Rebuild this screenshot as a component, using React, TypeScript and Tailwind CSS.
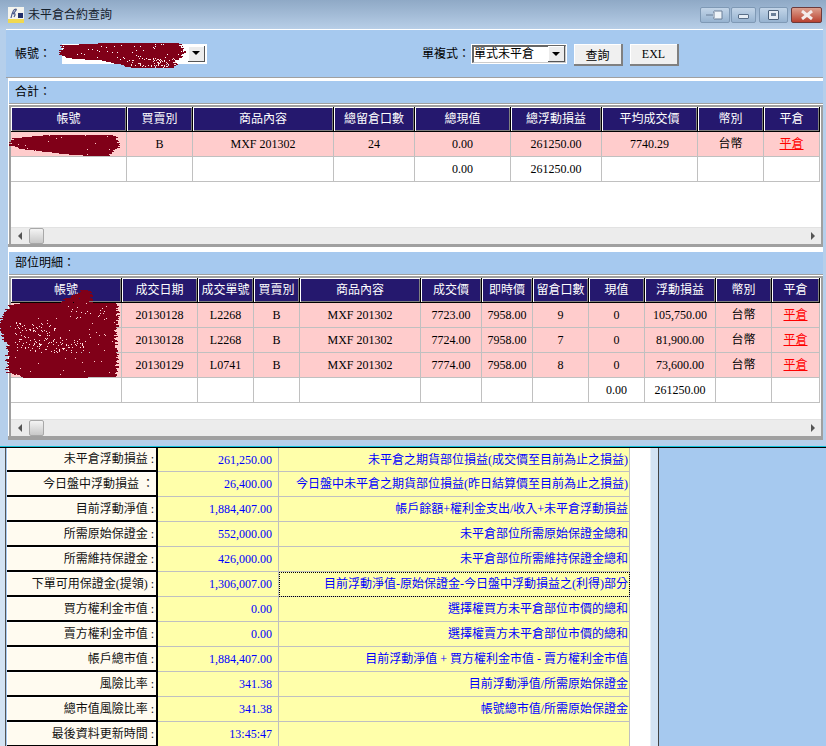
import React from "react";

type Key = [number, number, number];

function scribble(keys: Key[], seed: number, holes: number): string {
  let s = seed;
  const rnd = () => {
    s = (s * 16807) % 2147483647;
    return s / 2147483647;
  };
  let d = "";
  for (let k = 0; k < keys.length - 1; k++) {
    const [y0, l0, r0] = keys[k];
    const [y1, l1, r1] = keys[k + 1];
    for (let y = y0; y < y1; y++) {
      const t = (y - y0) / (y1 - y0);
      const l = Math.round(l0 + (l1 - l0) * t + (rnd() - 0.5) * 5);
      const r = Math.round(r0 + (r1 - r0) * t + (rnd() - 0.5) * 5);
      let x = l;
      while (x < r) {
        let w = 1;
        while (x + w < r && rnd() > holes) w++;
        d += `M${x} ${y}h${w}v1h${-w}z`;
        x += w + 1;
      }
    }
  }
  return d;
}

function dots(x: number, y: number, w: number, h: number, count: number, seed: number): string {
  let s = seed;
  const rnd = () => {
    s = (s * 16807) % 2147483647;
    return s / 2147483647;
  };
  let d = "";
  for (let i = 0; i < count; i++) {
    d += `M${Math.round(x + rnd() * w)} ${Math.round(y + rnd() * h)}h1v1h-1z`;
  }
  return d;
}

const blobs = [
  scribble([[43, 100, 180], [45, 62, 180], [52, 60, 185], [55, 62, 183], [58, 70, 178], [60, 100, 176], [64, 120, 176], [68, 132, 174]], 71, 0.02),
  scribble([[135, 45, 115], [138, 12, 118], [145, 10, 118], [148, 20, 117], [152, 50, 112], [156, 92, 108]], 137, 0.006),
  scribble([[290, 82, 90], [302, 60, 92], [303, 20, 118], [305, 10, 118], [320, 0, 118], [330, 0, 116], [345, 8, 117], [360, 7, 117], [372, 8, 117], [376, 22, 116], [378, 28, 60]], 419, 0.006),
];

const specks = [
  dots(15, 322, 40, 30, 110, 991),
  dots(55, 340, 30, 12, 40, 5323),
  dots(130, 58, 46, 9, 70, 2203),
  dots(70, 306, 40, 12, 16, 7741),
];

const HEAD = "h-[25px] p-0 bg-[#25186e] text-white font-normal text-center border-r border-b border-black shadow-[inset_1px_1px_0_#ffffff,inset_-1px_-1px_0_#808080]";
const CELL = "h-[25px] p-0 text-center border-r border-b border-[#c0c0c0] whitespace-nowrap";

function Grid({ widths, heads, rows }: { widths: string[]; heads: string[]; rows: { pink: boolean; cells: string[] }[] }) {
  return (
    <table className="table-fixed border-separate border-spacing-0 w-[809px] text-black">
      <colgroup>
        {widths.map((w, i) => (
          <col key={i} className={w} />
        ))}
      </colgroup>
      <thead>
        <tr>
          {heads.map((h, i) => (
            <th key={i} className={HEAD}>
              {h}
            </th>
          ))}
        </tr>
      </thead>
      <tbody>
        {rows.map((r, ri) => (
          <tr key={ri} className={r.pink ? "bg-[#ffcccc]" : "bg-white"}>
            {r.cells.map((c, ci) => (
              <td key={ci} className={CELL}>
                {c === "平倉" ? <span className="text-[#ff0000] underline">{c}</span> : c}
              </td>
            ))}
          </tr>
        ))}
      </tbody>
    </table>
  );
}

function ScrollBar() {
  return (
    <div className="h-[17px] bg-[#ececec] flex items-center border-t border-[#e2e2e2] pr-[6px]">
      <div className="w-[18px] flex justify-center">
        <div className="w-0 h-0 border-y-[4px] border-y-transparent border-r-[4px] border-r-[#555555]" />
      </div>
      <div className="w-[15px] h-[16px] rounded-[2px] border border-[#a8a8a8] bg-linear-to-b from-[#f4f4f4] to-[#c8c8c8]" />
      <div className="flex-1" />
      <div className="w-0 h-0 border-y-[4px] border-y-transparent border-l-[4px] border-l-[#555555]" />
    </div>
  );
}

function Panel({ title, top, area, children }: { title: string; top: string; area: string; children: React.ReactNode }) {
  return (
    <div className={`bg-white ml-[2px] pl-px ${top}`}>
      <div className="h-[23px] bg-[#a6c9ef] border-b border-[#a0a0a0] pl-[6px] flex items-center text-black">{title}</div>
      <div className="mt-px border-t-2 border-l-2 border-r-2 border-[#a0a0a0]">
        <div className={`bg-white border-r border-white ${area}`}>{children}</div>
        <ScrollBar />
      </div>
    </div>
  );
}

function DropArrow() {
  return (
    <div className="w-[17px] h-[16px] bg-[#ececec] border-r border-b border-[#555555] shadow-[inset_1px_1px_0_#ffffff] flex items-center justify-center">
      <div className="w-0 h-0 border-x-[4px] border-x-transparent border-t-[4px] border-t-black" />
    </div>
  );
}

function TitleButton({ w, ml, close, children }: { w: string; ml: string; close?: boolean; children: React.ReactNode }) {
  return (
    <div
      className={`${w} ${ml} h-[16px] rounded-[2px] border flex items-center justify-center ${
        close
          ? "border-[#6d3a3a] bg-linear-to-b from-[#dca08f] to-[#b8402f]"
          : "border-[#7f99b5] bg-linear-to-b from-[#c3d5e8] to-[#97b3d0]"
      }`}
    >
      {children}
    </div>
  );
}

const rowsBottom: [string, string, string][] = [
  ["未平倉浮動損益 :", "261,250.00", "未平倉之期貨部位損益(成交價至目前為止之損益)"],
  ["今日盤中浮動損益 ：", "26,400.00", "今日盤中未平倉之期貨部位損益(昨日結算價至目前為止之損益)"],
  ["目前浮動淨值 :", "1,884,407.00", "帳戶餘額+權利金支出/收入+未平倉浮動損益"],
  ["所需原始保證金 :", "552,000.00", "未平倉部位所需原始保證金總和"],
  ["所需維持保證金 :", "426,000.00", "未平倉部位所需維持保證金總和"],
  ["下單可用保證金(提領) :", "1,306,007.00", "目前浮動淨值-原始保證金-今日盤中浮動損益之(利得)部分"],
  ["買方權利金市值 :", "0.00", "選擇權買方未平倉部位市價的總和"],
  ["賣方權利金市值 :", "0.00", "選擇權賣方未平倉部位市價的總和"],
  ["帳戶總市值 :", "1,884,407.00", "目前浮動淨值 + 買方權利金市值 - 賣方權利金市值"],
  ["風險比率 :", "341.38", "目前浮動淨值/所需原始保證金"],
  ["總市值風險比率 :", "341.38", "帳號總市值/所需原始保證金"],
  ["最後資料更新時間 :", "13:45:47", ""],
];

export default function App() {
  return (
    <div className="relative w-[826px] h-[746px] overflow-hidden bg-[#a6c9ef] text-[12px] leading-none font-['Liberation_Serif','Noto_Sans_CJK_TC',serif]">
      {/* window */}
      <div className="h-[446px] bg-[#b5cfeb] flex flex-col">
        <div className="h-[29px] shrink-0 flex items-center pl-[8px] pr-[4px] bg-linear-to-b from-[#8fa9c6] to-[#b7cee7]">
          <svg width="16" height="16" viewBox="0 0 16 16" className="shrink-0">
            <rect width="16" height="16" fill="#f4f4ee" />
            <rect y="12" width="16" height="4" fill="#f0d850" />
            <path d="M3 11 C4 6 6 2 8 2 C9 2 7 5 5 7 C7 6 8 7 6 10" fill="none" stroke="#4a5a8a" strokeWidth="1.2" />
            <rect x="10" y="6" width="5" height="5" fill="#22306a" />
          </svg>
          <span className="ml-[4px] text-[#15202c]">未平倉合約查詢</span>
          <div className="flex-1" />
          <TitleButton w="w-[30px]" ml="ml-0">
            <svg width="20" height="12" viewBox="0 0 20 12">
              <path d="M1 6H8M8 3H9V9H8M9 2H17V10H9" fill="#eef3f8" stroke="#6a7f98" strokeWidth="1" />
            </svg>
          </TitleButton>
          <TitleButton w="w-[25px]" ml="ml-px">
            <div className="w-[11px] h-[5px] mt-[4px] bg-[#e6edf5] border border-[#5a6f88] rounded-[1px]" />
          </TitleButton>
          <TitleButton w="w-[29px]" ml="ml-[3px]">
            <div className="w-[11px] h-[10px] bg-[#e6edf5] border border-[#4a5f78] rounded-[1px] flex items-center justify-center">
              <div className="w-[5px] h-[3px] bg-[#6a7f98]" />
            </div>
          </TitleButton>
          <TitleButton w="w-[31px]" ml="ml-[3px]" close>
            <svg width="16" height="10" viewBox="0 0 16 10">
              <path d="M3 1L13 9M13 1L3 9" stroke="#f4ecea" strokeWidth="3" />
            </svg>
          </TitleButton>
        </div>

        <div className="pl-[6px] pr-[3px] flex-1 flex flex-col">
          <div className="h-[49px] shrink-0 bg-[#a6c9ef] border-t border-b border-t-white border-b-[#a0a0a0] flex items-center text-black pl-[9px]">
            <span className="w-[47px]">帳號：</span>
            <div className="w-[145px] h-[20px] bg-white flex items-center justify-end pr-[2px]">
              <DropArrow />
            </div>
            <span className="ml-[215px] w-[49px]">單複式：</span>
            <div className="w-[96px] h-[20px] bg-white p-px">
              <div className="h-full border-t-2 border-l-2 border-[#666666] border-b border-r border-b-[#cccccc] border-r-[#cccccc] flex items-center justify-between">
                <span>單式未平倉</span>
                <DropArrow />
              </div>
            </div>
            <div className="ml-[7px] mt-[3px] w-[49px] h-[22px] bg-[#f0f0f0] border-r-2 border-b-2 border-[#808080] shadow-[inset_1px_1px_0_#ffffff] flex items-center justify-center pt-[3px]">查詢</div>
            <div className="ml-[7px] mt-[3px] w-[49px] h-[22px] bg-[#f0f0f0] border-r-2 border-b-2 border-[#808080] shadow-[inset_1px_1px_0_#ffffff] flex items-center justify-center">EXL</div>
          </div>

          <Panel title="合計：" top="pt-[3px]" area="h-[120px]">
            <Grid
              widths={["w-[116px]", "w-[66px]", "w-[141px]", "w-[81px]", "w-[96px]", "w-[91px]", "w-[96px]", "w-[66px]", "w-[56px]"]}
              heads={["帳號", "買賣別", "商品內容", "總留倉口數", "總現值", "總浮動損益", "平均成交價", "幣別", "平倉"]}
              rows={[
                { pink: true, cells: ["", "B", "MXF 201302", "24", "0.00", "261250.00", "7740.29", "台幣", "平倉"] },
                { pink: false, cells: ["", "", "", "", "0.00", "261250.00", "", "", ""] },
              ]}
            />
          </Panel>
          <div className="border-b-[3px] border-[#a0a0a0] ml-[2px]" />

          <Panel title="部位明細：" top="pt-[5px]" area="h-[141px]">
            <Grid
              widths={["w-[111px]", "w-[76px]", "w-[56px]", "w-[46px]", "w-[121px]", "w-[61px]", "w-[51px]", "w-[56px]", "w-[56px]", "w-[71px]", "w-[56px]", "w-[48px]"]}
              heads={["帳號", "成交日期", "成交單號", "買賣別", "商品內容", "成交價", "即時價", "留倉口數", "現值", "浮動損益", "幣別", "平倉"]}
              rows={[
                { pink: true, cells: ["", "20130128", "L2268", "B", "MXF 201302", "7723.00", "7958.00", "9", "0", "105,750.00", "台幣", "平倉"] },
                { pink: true, cells: ["", "20130128", "L2268", "B", "MXF 201302", "7724.00", "7958.00", "7", "0", "81,900.00", "台幣", "平倉"] },
                { pink: true, cells: ["", "20130129", "L0741", "B", "MXF 201302", "7774.00", "7958.00", "8", "0", "73,600.00", "台幣", "平倉"] },
                { pink: false, cells: ["", "", "", "", "", "", "", "", "0.00", "261250.00", "", ""] },
              ]}
            />
          </Panel>
          <div className="border-b-[4px] border-[#a0a0a0] ml-[2px]" />
        </div>
      </div>

      {/* lower area */}
      <div className="h-px bg-[#10c0d8]" />
      <div className="flex border-t border-black h-[299px]">
        <div className="w-[5px] bg-[#d3e3f3] border-r border-[#555555] box-content" />
        <div className="w-px" />
        <table className="table-fixed border-separate border-spacing-0 w-[623px] h-fit self-start">
          <colgroup>
            <col className="w-[151px]" />
            <col className="w-[121px]" />
            <col className="w-[351px]" />
          </colgroup>
          <tbody>
            {rowsBottom.map(([a, b, c], i) => (
              <tr key={i} className={i === 0 ? "h-[24px]" : "h-[25px]"}>
                <td className="p-0 pr-[2px] text-right whitespace-nowrap bg-[#fffbf0] text-[#111111] border-r-2 border-b-2 border-black shadow-[inset_1px_1px_0_#ffffff]">{a}</td>
                <td className="p-0 pr-[6px] text-right whitespace-nowrap bg-[#ffffaa] text-[#0000ff] border-r border-b border-[#c0c0c0]">{b}</td>
                <td
                  className={`p-0 pr-px text-right whitespace-nowrap bg-[#ffffaa] text-[#0000ff] border-b border-[#c0c0c0] border-r border-r-[#c0c0c0] ${
                    i === 5 ? "outline outline-1 outline-dotted outline-black -outline-offset-1" : ""
                  }`}
                >
                  {c}
                </td>
              </tr>
            ))}
          </tbody>
        </table>
        <div className="w-[20px] bg-white" />
        <div className="w-[8px] bg-[#d3e3f3] border-l border-[#e8f0f8]" />
        <div className="w-px bg-[#444444]" />
        <div className="flex-1 bg-[#a6c9ef]" />
      </div>

      {/* hand-drawn redaction scribbles over the account cells */}
      <svg className="absolute left-0 top-0 pointer-events-none" width="826" height="400" viewBox="0 0 826 400" shapeRendering="crispEdges">
        {blobs.map((d, i) => (
          <path key={i} d={d} fill="#800018" />
        ))}
        {specks.map((d, i) => (
          <path key={i} d={d} fill="#ffe0e0" />
        ))}
      </svg>
    </div>
  );
}
